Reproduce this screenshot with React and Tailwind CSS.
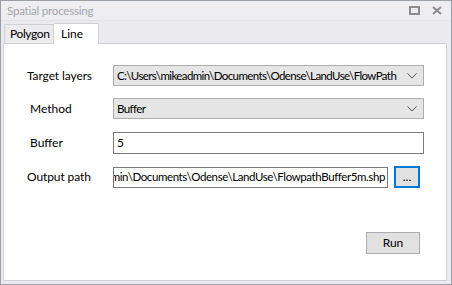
import React from 'react';

const font = { fontFamily: 'Lato, "Liberation Sans", sans-serif' };

const Chevron = () => (
  <svg width="10" height="6" viewBox="0 0 10 6" className="shrink-0">
    <path d="M0.5 0.5 L5 5 L9.5 0.5" fill="none" stroke="#555" strokeWidth="1" />
  </svg>
);

const Select = ({ value }) => (
  <div className="flex items-center h-[21px] w-[311px] border border-[#adadad] bg-[#e5e5e5] pl-[3px] pr-[6px]">
    <div className="flex-1 overflow-hidden whitespace-nowrap text-[11.5px] tracking-[-0.6px] text-black">{value}</div>
    <Chevron />
  </div>
);

const App = () => {
  return (
    <div style={font} className="w-[452px] h-[285px] border border-[#9b9fa8] bg-[#ebebef] flex flex-col">
      {/* title bar */}
      <div className="h-[20px] flex items-center bg-[#eeeef2] border-b border-[#e2e2e6]">
        <span className="ml-[6px] text-[11.5px] tracking-[-0.2px] text-[#a3a3a8]">Spatial processing</span>
        <div className="ml-auto flex items-center gap-[12px] mr-[9px]">
          <svg width="11" height="9" viewBox="0 0 11 9">
            <rect x="1" y="1" width="9" height="7" fill="none" stroke="#8a8a90" strokeWidth="2" />
          </svg>
          <svg width="10" height="9" viewBox="0 0 10 9">
            <path d="M1 1 L9 8 M9 1 L1 8" stroke="#8a8a90" strokeWidth="2" />
          </svg>
        </div>
      </div>

      {/* tabs */}
      <div className="flex items-end h-[22px] pl-[3px]">
        <div className="h-[19px] w-[50px] pl-[5px] flex items-center border border-b-0 border-[#cfcfd4] bg-[#ececef] text-[12px] tracking-[-0.4px] text-black">
          Polygon
        </div>
        <div className="h-[21px] w-[45px] pl-[7px] flex items-start pt-[1px] border border-b-0 border-l-0 border-[#cfcfd4] bg-white text-[12px] text-black -mb-px relative">
          Line
        </div>
      </div>

      {/* panel */}
      <div className="ml-[2px] mr-[4px] h-[238px] bg-white border border-[#cfcfd4] flex flex-col pl-[23px] pt-[21px]">
        <div className="flex items-center">
          <span className="w-[86px] text-[12px] tracking-[-0.1px] text-black">Target layers</span>
          <Select value="C:\Users\mikeadmin\Documents\Odense\LandUse\FlowPath" />
        </div>
        <div className="flex items-center mt-[12px]">
          <span className="w-[86px] pl-[3px] text-[12px] text-black">Method</span>
          <Select value="Buffer" />
        </div>
        <div className="flex items-center mt-[13px]">
          <span className="w-[86px] pl-[3px] text-[12px] text-black">Buffer</span>
          <div className="h-[22px] w-[311px] border border-[#7a7a7a] flex items-center pl-[3px] text-[12px] text-black">5</div>
        </div>
        <div className="flex items-center mt-[12px]">
          <span className="w-[86px] text-[12px] tracking-[-0.1px] text-black">Output path</span>
          <div className="h-[21px] w-[275px] border border-[#7a7a7a] flex items-center justify-end overflow-hidden pr-[2px]">
            <span className="whitespace-nowrap text-[11.5px] tracking-[-0.4px] text-black">C:\Users\mikeadmin\Documents\Odense\LandUse\FlowpathBuffer5m.shp</span>
          </div>
          <button className="ml-[6px] h-[22px] w-[26px] border-2 border-[#0078d7] bg-[#e1e1e1] text-[12px] text-black leading-none flex items-center justify-center">
            ...
          </button>
        </div>
        <div className="flex mt-[44px] pl-[339px]">
          <button className="h-[22px] w-[54px] border border-[#adadad] bg-[#e1e1e1] text-[12px] text-black">
            Run
          </button>
        </div>
      </div>
    </div>
  );
};

export default App;
